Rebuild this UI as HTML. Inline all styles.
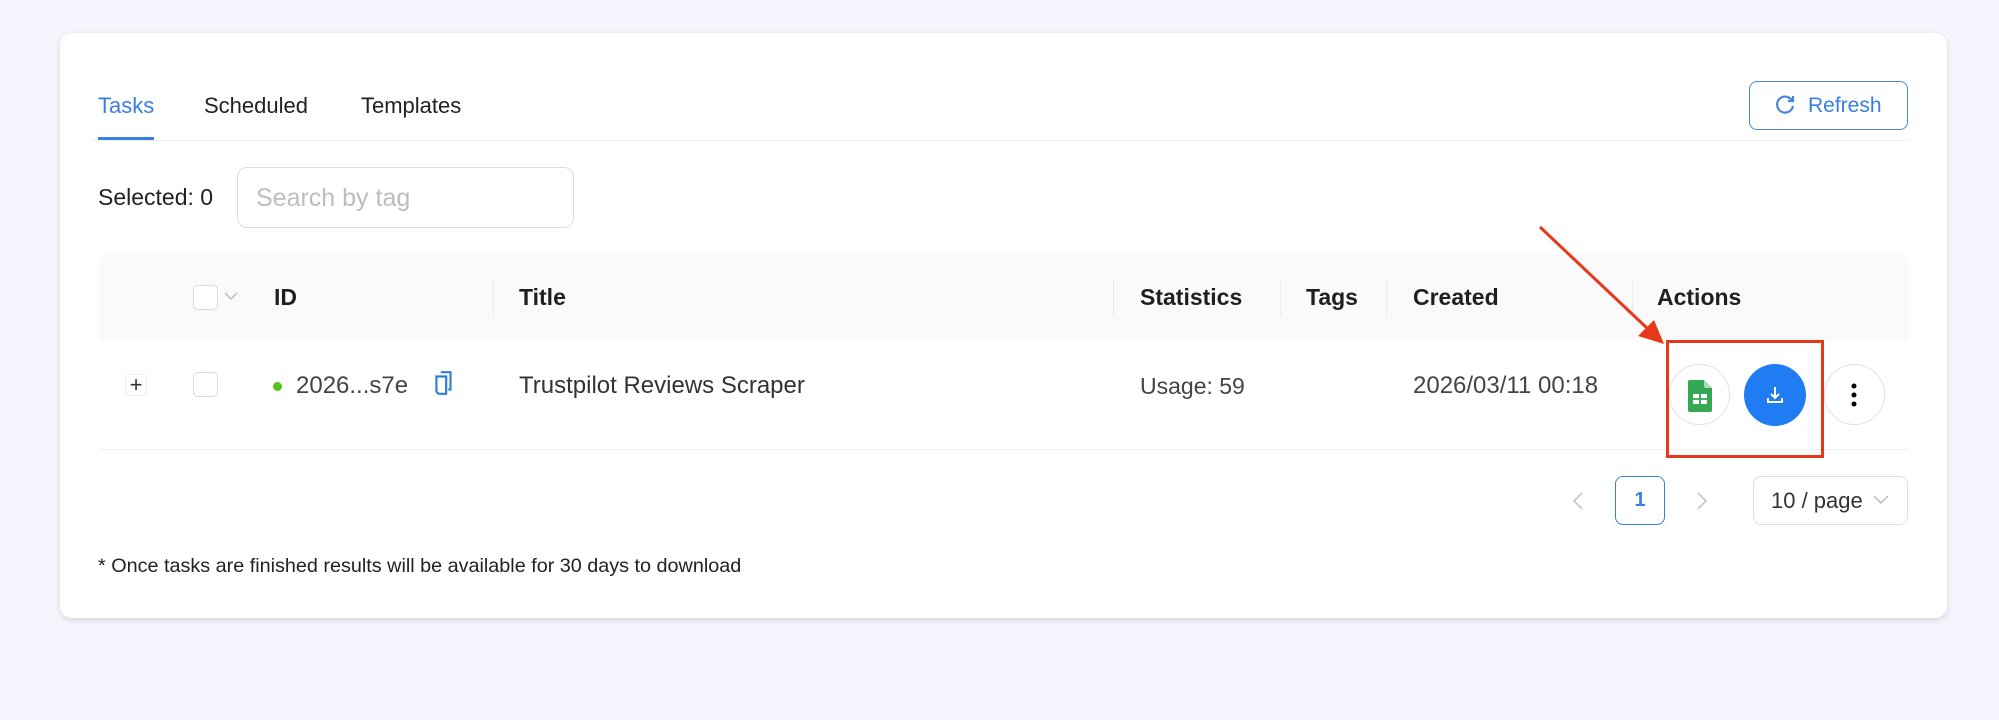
<!DOCTYPE html>
<html><head><meta charset="utf-8"><style>
*{box-sizing:border-box;margin:0;padding:0}
body{width:1999px;height:720px;background:#f3f4fc;font-family:"Liberation Sans",sans-serif;position:relative;overflow:hidden;color:#222}
.a{position:absolute}
.card{left:60px;top:33px;width:1887px;height:585px;background:#fff;border-radius:12px;box-shadow:0 2px 6px rgba(0,0,0,.12)}
.t{font-size:22px;line-height:26px;white-space:nowrap}
.h{font-weight:bold;font-size:23px;line-height:26px;color:#1f1f1f;white-space:nowrap}
.div{width:1px;height:38px;background:#ececf0;top:279px}
.cb{width:25px;height:25px;border:1.5px solid #d9d9d9;border-radius:5px;background:#fff}
.circ{width:61px;height:61px;border-radius:50%;border:1.5px solid #e2e2e2;background:#fff;top:364px}
</style></head><body>
<div class="a card"></div>
<div class="a t" style="left:98px;top:93px;color:#3a7fe0">Tasks</div>
<div class="a" style="left:98px;top:137px;width:56px;height:3px;background:#3a7fe0"></div>
<div class="a t" style="left:204px;top:93px">Scheduled</div>
<div class="a t" style="left:361px;top:93px">Templates</div>
<div class="a" style="left:92px;top:140px;width:1817px;height:1px;background:#eeeeee"></div>
<div class="a" style="left:1749px;top:81px;width:159px;height:49px;border:1.5px solid #4a86d8;border-radius:8px"></div>
<svg class="a" style="left:1773px;top:93px" width="24" height="24" viewBox="0 0 24 24"><path d="M19 7.5A8 8 0 1 0 20 13" fill="none" stroke="#4a86d8" stroke-width="2.2"/><path d="M20 3v5h-5" fill="none" stroke="#4a86d8" stroke-width="2.2"/></svg>
<div class="a t" style="left:1808px;top:93px;color:#3a7fe0;font-size:21px">Refresh</div>
<div class="a t" style="left:98px;top:184px;font-size:23px">Selected: 0</div>
<div class="a" style="left:237px;top:167px;width:337px;height:61px;border:1.5px solid #dcdcdc;border-radius:10px"></div>
<div class="a t" style="left:256px;top:184px;color:#bdbdbd;font-size:25px;line-height:28px">Search by tag</div>
<div class="a" style="left:99px;top:254px;width:1810px;height:86px;background:#fafafc;border-radius:8px 8px 0 0"></div>
<div class="a cb" style="left:193px;top:285px"></div>
<svg class="a" style="left:224px;top:291px" width="14" height="10"><path d="M1 2l6 6 6-6" fill="none" stroke="#bbb" stroke-width="1.5"/></svg>
<div class="a h" style="left:274px;top:284px">ID</div>
<div class="a div" style="left:493px"></div>
<div class="a h" style="left:519px;top:284px">Title</div>
<div class="a div" style="left:1113px"></div>
<div class="a h" style="left:1140px;top:284px">Statistics</div>
<div class="a div" style="left:1280px"></div>
<div class="a h" style="left:1306px;top:284px">Tags</div>
<div class="a div" style="left:1386px"></div>
<div class="a h" style="left:1413px;top:284px">Created</div>
<div class="a div" style="left:1632px"></div>
<div class="a h" style="left:1657px;top:284px">Actions</div>
<div class="a" style="left:125px;top:374px;width:22px;height:22px;border:1px solid #eee;border-radius:3px;font-size:22px;line-height:20px;text-align:center;color:#333">+</div>
<div class="a cb" style="left:193px;top:372px"></div>
<div class="a" style="left:273px;top:382px;width:9px;height:9px;border-radius:50%;background:#52c41a"></div>
<div class="a t" style="left:296px;top:373px;color:#444;font-size:24px">2026...s7e</div>
<svg class="a" style="left:434px;top:370px" width="20" height="26" viewBox="0 0 18 24"><path d="M6 2h9v16h-2" fill="none" stroke="#2f7de1" stroke-width="2"/><path d="M2 6h9v16H4l-2-2z" fill="none" stroke="#2f7de1" stroke-width="2"/></svg>
<div class="a t" style="left:519px;top:373px;color:#333;font-size:24px">Trustpilot Reviews Scraper</div>
<div class="a t" style="left:1140px;top:373px;color:#444;font-size:23px">Usage: 59</div>
<div class="a t" style="left:1413px;top:373px;color:#444;font-size:24px">2026/03/11 00:18</div>
<div class="a" style="left:99px;top:449px;width:1810px;height:1px;background:#eeeeee"></div>
<div class="a circ" style="left:1669px"></div>
<svg class="a" style="left:1688px;top:380px" width="24" height="32" viewBox="0 0 24 32"><path d="M2 0h14l8 8v22a2 2 0 0 1-2 2H2a2 2 0 0 1-2-2V2a2 2 0 0 1 2-2z" fill="#34a853"/><path d="M16 0l8 8h-6a2 2 0 0 1-2-2z" fill="#a8dbb7"/><rect x="5" y="14" width="14" height="10" fill="#fff"/><path d="M12 14v10M5 19h14" stroke="#34a853" stroke-width="1.8"/></svg>
<div class="a" style="left:1744px;top:364px;width:62px;height:62px;border-radius:50%;background:#1f7cf2"></div>
<svg class="a" style="left:1763px;top:383px" width="24" height="24" viewBox="0 0 24 24"><path d="M12 4v11M8 11l4 4 4-4M5 15v4h14v-4" fill="none" stroke="#fff" stroke-width="2"/></svg>
<div class="a circ" style="left:1824px"></div>
<svg class="a" style="left:1848px;top:381px" width="12" height="28"><circle cx="6" cy="5" r="2.5"/><circle cx="6" cy="14" r="2.5"/><circle cx="6" cy="23" r="2.5"/></svg>
<div class="a" style="left:1666px;top:340px;width:158px;height:118px;border:3.5px solid #e8381a"></div>
<svg class="a" style="left:0;top:0" width="1999" height="720"><line x1="1540" y1="227" x2="1648" y2="329" stroke="#e8381a" stroke-width="3"/><path d="M1664 344l-26-8 16-16z" fill="#e8381a"/></svg>
<svg class="a" style="left:1572px;top:492px" width="12" height="18"><path d="M10 1L2 9l8 8" fill="none" stroke="#c4c4c4" stroke-width="1.6"/></svg>
<div class="a" style="left:1615px;top:476px;width:50px;height:49px;border:1.5px solid #3a7fe0;border-radius:8px;color:#3a7fe0;font-weight:bold;font-size:20px;line-height:46px;text-align:center">1</div>
<svg class="a" style="left:1696px;top:492px" width="12" height="18"><path d="M2 1l8 8-8 8" fill="none" stroke="#c4c4c4" stroke-width="1.6"/></svg>
<div class="a" style="left:1753px;top:476px;width:155px;height:49px;border:1.5px solid #dedede;border-radius:8px"></div>
<div class="a t" style="left:1771px;top:488px;color:#333;font-size:22px">10 / page</div>
<svg class="a" style="left:1873px;top:495px" width="16" height="10"><path d="M1 1l7 7 7-7" fill="none" stroke="#bbb" stroke-width="1.5"/></svg>
<div class="a t" style="left:98px;top:553px;font-size:19.8px;color:#222">* Once tasks are finished results will be available for 30 days to download</div>
</body></html>
